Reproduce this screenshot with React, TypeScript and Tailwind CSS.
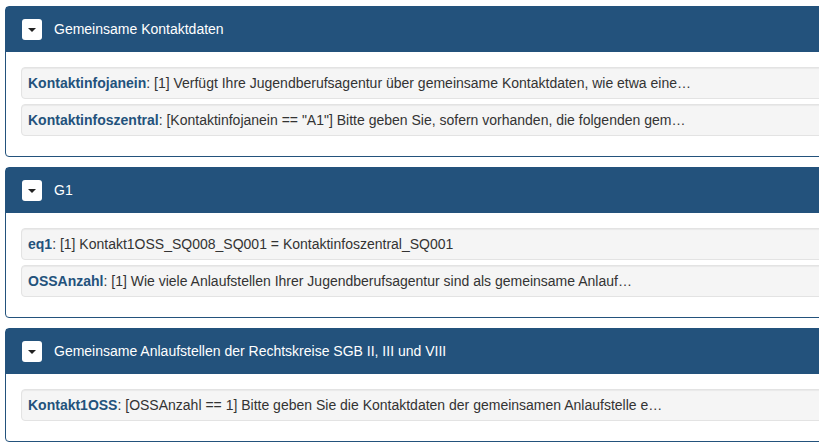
import React from 'react';

interface Item {
  name: string;
  text: string;
}

interface Group {
  title: string;
  items: Item[];
}

const groups: Group[] = [
  {
    title: 'Gemeinsame Kontaktdaten',
    items: [
      { name: 'Kontaktinfojanein', text: ': [1] Verfügt Ihre Jugendberufsagentur über gemeinsame Kontaktdaten, wie etwa eine…' },
      { name: 'Kontaktinfoszentral', text: ': [Kontaktinfojanein == "A1"] Bitte geben Sie, sofern vorhanden, die folgenden gem…' },
    ],
  },
  {
    title: 'G1',
    items: [
      { name: 'eq1', text: ': [1] Kontakt1OSS_SQ008_SQ001 = Kontaktinfoszentral_SQ001' },
      { name: 'OSSAnzahl', text: ': [1] Wie viele Anlaufstellen Ihrer Jugendberufsagentur sind als gemeinsame Anlauf…' },
    ],
  },
  {
    title: 'Gemeinsame Anlaufstellen der Rechtskreise SGB II, III und VIII',
    items: [
      { name: 'Kontakt1OSS', text: ': [OSSAnzahl == 1] Bitte geben Sie die Kontaktdaten der gemeinsamen Anlaufstelle e…' },
    ],
  },
];

const Panel: React.FC<{ group: Group }> = ({ group }) => (
  <div className="w-[860px] shrink-0 rounded-[4px] border border-[#23527c] bg-white">
    <div className="flex h-[45px] items-center gap-3 bg-[#23527c] pl-4">
      <button className="flex h-[21px] w-5 items-center justify-center rounded-[3px] bg-white">
        <span className="h-0 w-0 border-x-[4px] border-t-[4px] border-x-transparent border-t-[#222]" />
      </button>
      <span className="text-[14px] text-white">{group.title}</span>
    </div>
    <div className="p-[15px]">
      {group.items.map((item) => (
        <div
          key={item.name}
          className="mb-[5px] rounded-[4px] border border-[#e3e3e3] bg-[#f5f5f5] px-[6px] py-[5px] text-[14px] leading-5 text-[#333] shadow-[inset_0_1px_1px_rgba(0,0,0,0.05)]"
        >
          <span className="font-bold text-[#23527c]">{item.name}</span>
          {item.text}
        </div>
      ))}
    </div>
  </div>
);

export default function App() {
  return (
    <div
      className="flex h-[443px] w-[819px] flex-col gap-[10px] overflow-hidden bg-white pl-[5px] pt-[6px]"
      style={{ fontFamily: '"Liberation Sans", Arial, sans-serif' }}
    >
      {groups.map((g) => (
        <Panel key={g.title} group={g} />
      ))}
    </div>
  );
}
